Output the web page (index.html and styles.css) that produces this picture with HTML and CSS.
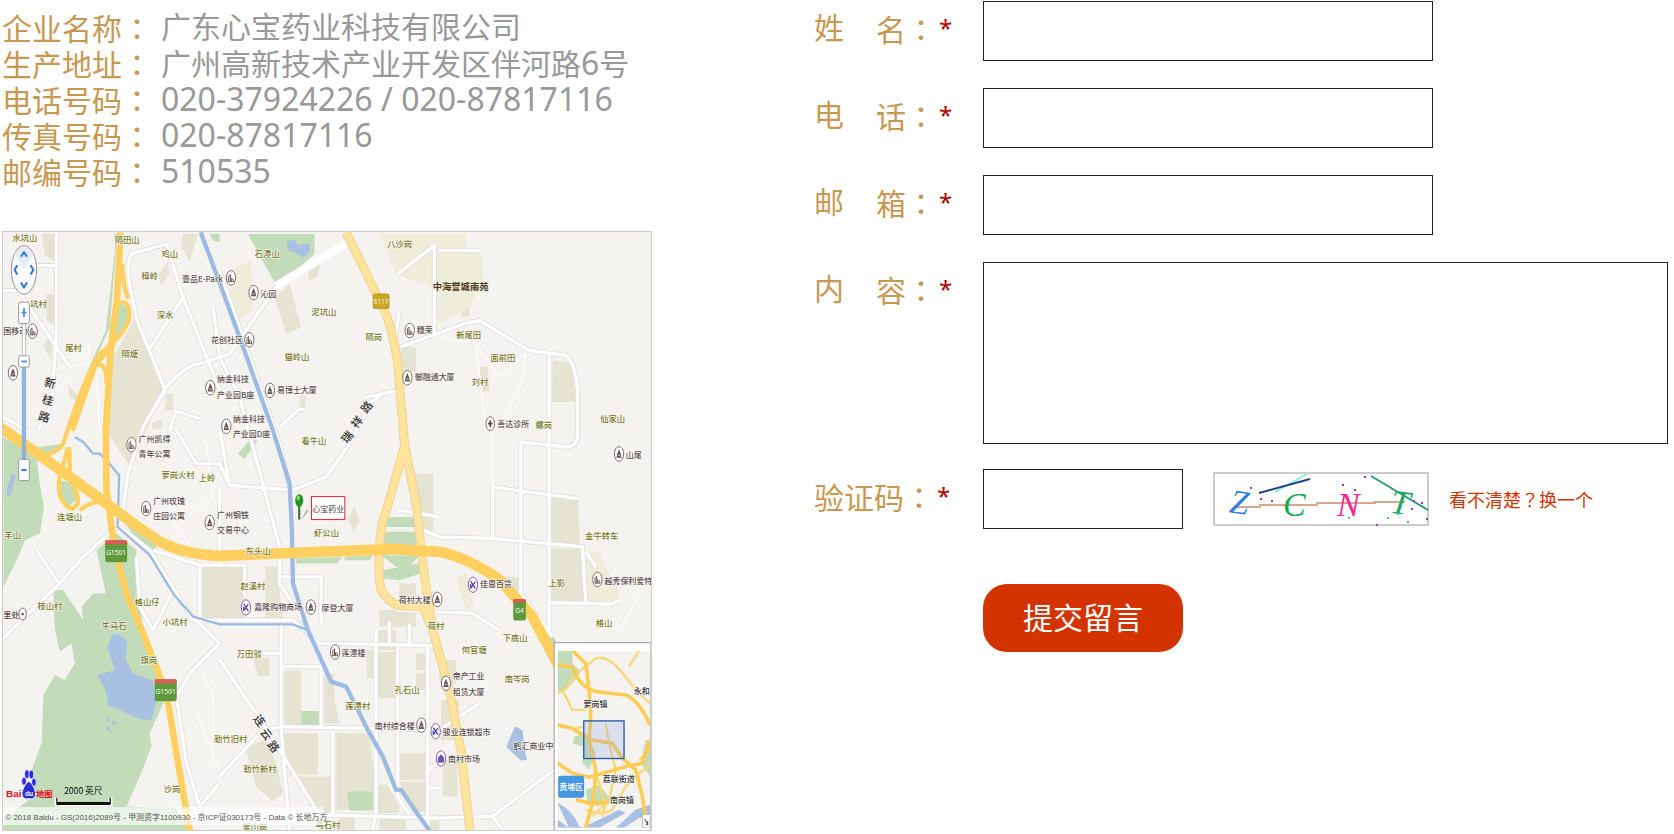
FILE: index.html
```html
<!DOCTYPE html>
<html lang="zh-CN">
<head>
<meta charset="utf-8">
<title>联系我们</title>
<link rel="stylesheet" href="styles.css">
</head>
<body>
<main class="contact">
  <section class="company">
    <dl class="info">
      <div class="info-row"><dt>企业名称<span class="colon" lang="zh-Hant">：</span></dt><dd>广东心宝药业科技有限公司</dd></div>
      <div class="info-row"><dt>生产地址<span class="colon" lang="zh-Hant">：</span></dt><dd>广州高新技术产业开发区伴河路<span class="num">6</span>号</dd></div>
      <div class="info-row"><dt>电话号码<span class="colon" lang="zh-Hant">：</span></dt><dd class="num">020-37924226 / 020-87817116</dd></div>
      <div class="info-row"><dt>传真号码<span class="colon" lang="zh-Hant">：</span></dt><dd class="num">020-87817116</dd></div>
      <div class="info-row"><dt>邮编号码<span class="colon" lang="zh-Hant">：</span></dt><dd class="num">510535</dd></div>
    </dl>
    <svg class="map" viewBox="9 4 1947 1798" role="img" aria-label="心宝药业位置地图">
      <defs>
        <g id="poi"><ellipse rx="14" ry="22" fill="#fff" stroke="#796d6d" stroke-width="3"/><path d="M-7 11V-5L-2-10V11M1 11V1L7 5V11M-8 11H8" fill="none" stroke="#6b5757" stroke-width="3"/></g>
        <g id="tower"><ellipse rx="14" ry="22" fill="#fff" stroke="#796d6d" stroke-width="3"/><path d="M0-14L5-2L8 11H-8L-5-2Z" fill="#6b5757"/><path d="M-4 4H4" stroke="#fff" stroke-width="2"/></g>
        <g id="shop"><ellipse rx="14" ry="23" fill="#fff" stroke="#7a5fae" stroke-width="3"/><path d="M-7-11L7 11M7-9L-6 9M-7-2V11" stroke="#5c3da5" stroke-width="4"/></g>
      </defs>
      <rect x="9" y="4" width="1947" height="1798" fill="#f4f3f0"/>

      <g fill="#e5e3d1">
        <path d="M125 10H170V95L135 75ZM137 190H165V285L140 270ZM130 345L155 310V390ZM205 465L230 490V510L210 500ZM475 135L505 90L510 130L485 165ZM550 10H595L570 90L545 50Z"/>
        <path d="M405 265L495 475L440 600L385 700L325 610L340 380ZM500 490H520V540H495ZM455 580L485 565V595L460 598Z"/>
        <path d="M825 200L870 160L905 290L860 310ZM920 100H963L955 135L930 150ZM1205 350H1250V425H1205ZM900 495H920L915 545L900 535Z"/>
        <path d="M1660 390L1720 395L1730 515H1658ZM1382 230L1410 228L1412 258L1385 260ZM1440 410H1465L1470 480L1450 485ZM1657 800H1738L1742 950H1657ZM1657 955H1755V1120H1657Z"/>
        <path d="M1245 728L1302 732V910H1265ZM660 1010H735V1175H610V1010ZM797 1010H840V1080L850 1170H797ZM1510 1040H1562V1090L1530 1080ZM1045 865L1065 830L1082 870L1063 905Z"/>
        <path d="M855 1322H905V1495H855ZM975 1330H1005V1410L1020 1480H975ZM1100 1260H1122V1345H1103ZM1138 1200H1190V1260H1138ZM1135 1265H1187V1405H1135ZM1250 1270H1280V1320H1250ZM1250 1330H1280V1380H1250Z"/>
        <path d="M850 1510H955V1635H870ZM1010 1510H1110L1125 1640H1010ZM895 1640H995V1750H940ZM1010 1640H1125V1740H1010ZM1200 1570H1278V1650H1200ZM1200 1655H1278V1745L1245 1750ZM1135 1665H1165L1200 1730V1750H1135ZM1140 1765H1220V1800H1140ZM1020 1765H1065V1800H1020ZM1280 1765H1320V1800H1280Z"/>
        <path d="M735 1550L800 1530L830 1600L850 1690L820 1715L770 1670ZM760 1285H810V1337H775Z"/>
        <path d="M1200 1060H1250V1120H1200ZM1140 1140H1250V1190H1140ZM1320 1290H1370V1360H1320ZM1325 1410H1380V1530H1325ZM1330 1590H1375V1700H1330Z"/>
      </g>
      <g fill="#eeedda">
        <path d="M690 120L755 90L760 240L715 270L695 200ZM1140 10H1400V50L1445 70L1455 140L1410 230L1320 280L1295 170L1190 130Z"/>
        <path d="M1760 965H1800L1825 1020L1860 1080L1855 1115L1765 1115ZM1370 1045L1400 1025L1425 1130L1400 1140Z"/>
      </g>
      <g fill="#c2dcba">
        <path d="M745 10H945V70L900 110L830 165L805 120Z"/>
        <path d="M630 10H660V35L640 30Z"/>
        <path d="M10 620L110 680L118 750L132 830L120 910L75 930L50 990L10 1070Z"/>
        <path d="M355 225Q385 215 382 250Q380 300 345 320ZM345 60V10H352L330 290L285 390H277L318 300Z"/>
        <path d="M75 655L190 640L160 670L110 690ZM180 750L225 760L232 805L205 830L182 805Z"/>
        <path d="M375 880L470 945V970L430 950Z"/>
        <path d="M190 1080L160 1080L165 1200L180 1265L215 1240L225 1300L195 1350L165 1335L130 1395L125 1540L95 1620L100 1700L10 1770V1802H570L530 1735L380 1730L420 1640L455 1550L450 1510L495 1410L470 1300L430 1200L410 1050L410 960L350 910L290 960L318 1090L280 1090L245 1130L250 1170Z"/>
        <path d="M715 670L750 630L775 630L735 685ZM890 985L1030 980L1010 1000H890ZM1035 980L1120 975L1110 990H1035Z"/>
        <path d="M1165 860H1245L1250 890H1155ZM1160 905H1250L1260 945H1145ZM1145 975H1260L1230 1010H1190ZM1150 1020L1255 1000L1265 1030L1200 1050L1150 1045Z"/>
        <path d="M1400 975L1500 1030L1630 1170L1670 1230V1300L1560 1090Z"/>
        <path d="M905 1443H960V1492H905ZM1043 1685H1120V1742H1050Z"/>
      </g>
      <g fill="#a8c0e1">
        <path d="M340 1210Q375 1215 382 1240L378 1290L400 1330L460 1352L468 1420L455 1470L420 1468L325 1425L318 1380L292 1335L345 1320L322 1250Z"/>
        <path d="M862 30L885 28L895 42L928 38L932 60L912 82L885 65L865 60ZM1548 1488L1570 1502L1577 1560L1583 1590L1565 1592L1522 1552L1528 1535Z"/>
        <path d="M35 730L48 735L35 790L22 800L20 780ZM318 1465L326 1460L326 1478ZM320 1485L340 1510L322 1500ZM335 1475L350 1472L340 1490Z"/>
      </g>

      <g fill="none" stroke="#dedede" stroke-width="15" stroke-linejoin="round">
        <path d="M170 10V300L155 520L115 600M10 560L80 600M110 105H168M10 180H55L210 410M500 40L395 70Q375 100 395 190L410 265L495 475M500 40L550 200L660 480M550 200L450 355"/>
        <path d="M365 870L385 730L430 590L500 470Q560 400 600 400L690 370L760 270L830 170L1060 30M530 600L590 700H660L690 765L880 780L980 740L1050 640L1115 515L1150 490L1200 480M525 540L600 565M530 540L510 600"/>
        <path d="M660 120L760 410L840 640L875 790M640 230L660 380L720 500L840 950V1060L930 1200M1200 350L1400 278L1440 270L1590 360L1700 375Q1730 400 1735 480V620Q1730 650 1700 650L1565 635V1090L1660 1220M1650 370V1200M1480 770L1735 805M1480 770V925M1250 890L1320 920L1480 925L1750 950L1760 1115M1655 1118L1840 1122L1860 1110M1760 965L1790 1010"/>
        <path d="M350 890L250 980L170 1070L80 1155L10 1225M180 1065L110 960M360 890L450 960L580 1170H880L960 1240L1240 1245L1330 1250M460 960L600 1005L735 1005V1100M600 1005V1170M410 980L420 1130L460 1200M520 1080L460 1200"/>
        <path d="M660 1290L790 1480L960 1755L1320 1765M845 1180V1500L870 1802M660 1640L790 1500L850 1490L1320 1500L1440 1420M845 1310H965V1490M1130 1200V1750L1120 1800M1195 1250V1700L1230 1755M1285 1250V1800M1000 1505V1755M780 1270H840M1320 1765L1480 1760L1665 1620M1480 1760L1510 1800M530 1400L570 1330L660 1240L560 1140M530 1400L560 1600L600 1730L660 1660M1285 1620L1330 1590M1285 1675H1320"/>
        <path d="M1190 1140L1420 1150L1500 1200M835 1040H965V1180M1170 1175V1250M1230 1180V1250M1200 840L1320 860M660 770V1000M660 600L690 765M840 590L900 535L920 540M1100 500L1150 490M1320 60H1440M1195 130L1305 45V310M1190 310L1200 240"/>
      </g>
      <g fill="none" stroke="#fff" stroke-width="10" stroke-linejoin="round">
        <path d="M170 10V300L155 520L115 600M10 560L80 600M110 105H168M10 180H55L210 410M500 40L395 70Q375 100 395 190L410 265L495 475M500 40L550 200L660 480M550 200L450 355"/>
        <path d="M365 870L385 730L430 590L500 470Q560 400 600 400L690 370L760 270L830 170L1060 30M530 600L590 700H660L690 765L880 780L980 740L1050 640L1115 515L1150 490L1200 480M525 540L600 565M530 540L510 600"/>
        <path d="M660 120L760 410L840 640L875 790M640 230L660 380L720 500L840 950V1060L930 1200M1200 350L1400 278L1440 270L1590 360L1700 375Q1730 400 1735 480V620Q1730 650 1700 650L1565 635V1090L1660 1220M1650 370V1200M1480 770L1735 805M1480 770V925M1250 890L1320 920L1480 925L1750 950L1760 1115M1655 1118L1840 1122L1860 1110M1760 965L1790 1010"/>
        <path d="M350 890L250 980L170 1070L80 1155L10 1225M180 1065L110 960M360 890L450 960L580 1170H880L960 1240L1240 1245L1330 1250M460 960L600 1005L735 1005V1100M600 1005V1170M410 980L420 1130L460 1200M520 1080L460 1200"/>
        <path d="M660 1290L790 1480L960 1755L1320 1765M845 1180V1500L870 1802M660 1640L790 1500L850 1490L1320 1500L1440 1420M845 1310H965V1490M1130 1200V1750L1120 1800M1195 1250V1700L1230 1755M1285 1250V1800M1000 1505V1755M780 1270H840M1320 1765L1480 1760L1665 1620M1480 1760L1510 1800M530 1400L570 1330L660 1240L560 1140M530 1400L560 1600L600 1730L660 1660M1285 1620L1330 1590M1285 1675H1320"/>
        <path d="M1190 1140L1420 1150L1500 1200M835 1040H965V1180M1170 1175V1250M1230 1180V1250M1200 840L1320 860M660 770V1000M660 600L690 765M840 590L900 535L920 540M1100 500L1150 490M1320 60H1440M1195 130L1305 45V310M1190 310L1200 240"/>
        <path d="M830 165L1055 30" stroke-width="24"/>
      </g>
      <g fill="none" stroke="#fff" stroke-width="3">
        <path d="M165 420L220 390L265 350V400L210 410M180 470L200 440M260 400L290 430L300 600M1320 320L1430 340L1500 440L1580 370M1430 340L1460 600M1580 370L1570 450L1500 590M1480 600V770M620 640L640 800L580 850M520 870L560 930M610 1330L640 1400V1600M590 1450L660 1620M1860 1200L1920 1100"/>
      </g>

      <g fill="none" stroke="#9dbbe2" stroke-linejoin="round">
        <path stroke-width="13" d="M603 5L650 130L720 320L820 600L870 760L877 900L880 1060L925 1200L995 1355L1040 1370L1105 1500L1150 1580L1190 1680H1205L1260 1760L1290 1802"/>
        <path stroke-width="7" d="M225 620L250 635L280 670H300L320 690L358 735L353 890L450 975L520 1090L580 1160L660 1183H880L925 1200"/>
      </g>

      <g fill="none" stroke="#efcf86" stroke-width="27" stroke-linejoin="round">
        <path d="M1040 5L1160 250Q1195 350 1200 460L1217 660M1217 640Q1160 850 1148 880Q1130 1000 1145 1080Q1170 1120 1200 1127L1270 1130L1300 1200M1215 640L1252 830L1270 1000L1300 1200L1350 1380L1385 1560L1412 1802"/>
      </g>
      <g fill="none" stroke="#fee39c" stroke-width="22" stroke-linejoin="round">
        <path d="M1040 5L1160 250Q1195 350 1200 460L1217 660M1217 640Q1160 850 1148 880Q1130 1000 1145 1080Q1170 1120 1200 1127L1270 1130L1300 1200M1215 640L1252 830L1270 1000L1300 1200L1350 1380L1385 1560L1412 1802"/>
      </g>
      <g fill="none" stroke="#ffd05f" stroke-linejoin="round">
        <path stroke-width="13" d="M367 100Q370 170 385 205M350 225Q390 195 388 260Q380 310 300 370Q260 420 190 640Q170 670 130 675M205 650L185 720Q170 760 182 800Q195 830 215 835Q240 830 232 795L210 730L208 650M300 815Q270 815 240 840M285 405Q320 390 320 460"/>
        <path stroke-width="20" d="M362 5L352 200L333 350L318 600L320 780L345 960L380 1090L430 1210L500 1390L535 1600L570 1802M340 340L285 400L215 600"/>
        <path stroke-width="32" d="M0 590L120 675L300 805L380 865L480 935Q560 975 660 977L880 968L1180 957L1320 965Q1400 980 1500 1048L1600 1160L1680 1310"/>
      </g>

      <g class="place">
        <text x="75" y="32">水坑山</text><text x="382" y="36">隔田山</text><text x="510" y="78">鸡山</text><text x="450" y="146">樟岭</text><text x="496" y="262">深水</text><text x="116" y="230">坑村</text><text x="221" y="362">尾村</text><text x="390" y="380">隔塘</text>
        <text x="803" y="80">石潭山</text><text x="1201" y="50">八沙岗</text><text x="973" y="252">泥坑山</text><text x="1123" y="328">隔岗</text><text x="892" y="388">猫岭山</text><text x="1408" y="322">新尾田</text><text x="1511" y="392">面前田</text><text x="1442" y="464">刘村</text><text x="1634" y="592">螺岗</text><text x="1841" y="576">仙家山</text>
        <text x="535" y="742">萝岗火村</text><text x="622" y="752">上岭</text><text x="209" y="868">连塘山</text><text x="38" y="922">羊山</text><text x="150" y="1138">枝山村</text><text x="442" y="1124">格山仔</text><text x="526" y="1186">小坑村</text><text x="343" y="1198">牛马石</text><text x="943" y="640">看牛山</text><text x="981" y="916">虾公山</text><text x="776" y="972">东头山</text><text x="760" y="1076">赵溪村</text>
        <text x="1808" y="926">金牛转车</text><text x="1673" y="1068">上影</text><text x="1815" y="1188">格山</text><text x="1310" y="1196">荷村</text><text x="447" y="1300">旗岗</text><text x="517" y="1686">沙岗</text><text x="749" y="1280">万田驳</text><text x="693" y="1536">勒竹旧村</text><text x="781" y="1628">勒竹新村</text><text x="1075" y="1436">莲潭村</text><text x="1223" y="1390">孔石山</text><text x="1425" y="1270">何官塘</text><text x="1548" y="1234">下底山</text><text x="1554" y="1356">南岑岗</text><text x="766" y="1800">釜山岗</text><text x="985" y="1796">乌石村</text>
      </g>
      <g class="spot">
        <text x="608" y="154">壹品E-Park</text><text x="806" y="198">沁园</text><text x="682" y="338">花创社区</text><text x="1276" y="308">穗荣</text><text x="1306" y="450">御融通大厦</text><text x="892" y="488">易博士大厦</text><text x="700" y="456">纳金科技</text><text x="708" y="502">产业园B座</text><text x="748" y="574">纳金科技</text><text x="756" y="620">产业园D座</text><text x="46" y="310">国移动</text>
        <text x="464" y="634">广州凯得</text><text x="464" y="680">青年公寓</text><text x="508" y="820">广州玫瑰</text><text x="508" y="866">庄园公寓</text><text x="700" y="864">广州钢铁</text><text x="700" y="908">交易中心</text><text x="1542" y="590">善达诊所</text><text x="1904" y="682">山尾</text><text x="1490" y="1072">佳恩百货</text><text x="1246" y="1118">荷村大楼</text><text x="836" y="1140">嘉隆购物商场</text><text x="1014" y="1142">摩登大厦</text><text x="34" y="1164">里处</text><text x="1062" y="1278">莲潭楼</text><text x="1186" y="1498">南村综合楼</text><text x="1408" y="1348">帝产工业</text><text x="1408" y="1394">租赁大厦</text><text x="1402" y="1516">骏业连锁超市</text><text x="1394" y="1598">南村市场</text><text x="1603" y="1556">鹤汇商业中</text><text x="1888" y="1062">越秀保利爱特</text>
      </g>
      <text class="estate" x="1384" y="178">中海誉城南苑</text>
      <g class="street">
        <text x="150" y="470" transform="rotate(15 150 460)">新</text><text x="143" y="522" transform="rotate(15 143 512)">桂</text><text x="132" y="572" transform="rotate(15 132 562)">路</text>
        <text x="1044" y="632" transform="rotate(-52 1044 620)">瑞</text><text x="1073" y="587" transform="rotate(-52 1073 575)">祥</text><text x="1102" y="542" transform="rotate(-52 1102 530)">路</text>
        <text x="778" y="1484" transform="rotate(52 778 1474)">连</text><text x="798" y="1524" transform="rotate(52 798 1514)">云</text><text x="820" y="1562" transform="rotate(52 820 1552)">路</text>
      </g>

      <use href="#poi" x="694" y="142"/><use href="#tower" x="762" y="186"/><use href="#poi" x="749" y="328"/><use href="#poi" x="1231" y="300"/><use href="#tower" x="1224" y="442"/><use href="#tower" x="811" y="480"/><use href="#tower" x="632" y="472"/><use href="#tower" x="680" y="588"/><use href="#poi" x="98" y="302"/><use href="#tower" x="39" y="427"/><use href="#poi" x="395" y="643"/><use href="#poi" x="439" y="835"/><use href="#tower" x="630" y="877"/><use href="#tower" x="1860" y="671"/><use href="#poi" x="1795" y="1048"/><use href="#tower" x="1314" y="1108"/><use href="#tower" x="934" y="1131"/><use href="#poi" x="1007" y="1266"/><use href="#tower" x="1266" y="1486"/><use href="#tower" x="1340" y="1360"/>
      <use href="#shop" x="739" y="1132"/><use href="#shop" x="1421" y="1064"/><use href="#shop" x="1309" y="1504"/>
      <ellipse cx="1325" cy="1586" rx="14" ry="23" fill="#fff" stroke="#7a5fae" stroke-width="3"/><path d="M1317 1582H1333V1597H1317ZM1320 1582Q1325 1568 1330 1582" fill="#7a4fc0" stroke="#5c3da5" stroke-width="2"/>
      <ellipse cx="1473" cy="580" rx="13" ry="21" fill="#fff" stroke="#796d6d" stroke-width="3"/><path d="M1466 580H1480M1473 570V590" stroke="#6b3b3b" stroke-width="5"/>
      <ellipse cx="68" cy="1152" rx="11" ry="18" fill="#fff" stroke="#796d6d" stroke-width="3"/><circle cx="68" cy="1152" r="4" fill="#6b5757"/>

      <g class="shield">
        <rect x="1121" y="190" width="48" height="44" rx="5" fill="#c9a71f" stroke="#a58a1c" stroke-width="2"/><text x="1145" y="219">S117</text>
        <rect x="316" y="930" width="66" height="66" rx="6" fill="#5f9b3c"/><path d="M316 940V934Q316 930 322 930H376Q382 930 382 934V942H316Z" fill="#dd5a5a"/><text x="349" y="976">G1501</text>
        <rect x="465" y="1348" width="66" height="66" rx="6" fill="#5f9b3c"/><path d="M465 1360V1352Q465 1348 471 1348H525Q531 1348 531 1352V1360Z" fill="#dd5a5a"/><text x="498" y="1392">G1501</text>
        <rect x="1542" y="1107" width="38" height="64" rx="5" fill="#5f9b3c"/><path d="M1542 1118V1111Q1542 1107 1547 1107H1575Q1580 1107 1580 1111V1118Z" fill="#dd5a5a"/><text x="1561" y="1150">G4</text>
      </g>

      <path d="M903 870L922 838L928 842Z" fill="#b5b5b0"/><path d="M896 825H902V868H896Z" fill="#2e6d26"/><ellipse cx="899" cy="811" rx="12" ry="19" fill="#22941c"/><ellipse cx="896" cy="803" rx="5" ry="8" fill="#89da6c"/>
      <rect x="936" y="799" width="100" height="69" fill="#fff" stroke="#f31f2a" stroke-width="3"/>
      <text class="marker" x="986" y="844">心宝药业</text>

      <g stroke-linejoin="round">
        <ellipse cx="72" cy="118" rx="38" ry="73" fill="#f8fafc" stroke="#929292" stroke-width="3"/><path d="M72 118L45 68Q72 28 99 68Z" fill="#e4ecf8"/>
        <path d="M63 78L72 64L81 78M63 156L72 171L81 156M52 104L44 118L52 132M92 104L100 118L92 132" fill="none" stroke="#3674dd" stroke-width="6"/>
        <rect x="67" y="270" width="10" height="120" fill="#fff" stroke="#a1a1a1" stroke-width="2"/><rect x="67" y="400" width="10" height="290" fill="#8bb4f4" stroke="#8d9bb0" stroke-width="2"/>
        <rect x="56" y="215" width="32" height="64" rx="5" fill="#fff" stroke="#999" stroke-width="3"/><path d="M64 246H80M72 232V260" stroke="#4b88ed" stroke-width="5"/>
        <rect x="56" y="376" width="32" height="34" rx="5" fill="#fff" stroke="#999" stroke-width="3"/><path d="M64 393H81" stroke="#4b88ed" stroke-width="5"/>
        <rect x="56" y="687" width="32" height="64" rx="5" fill="#fff" stroke="#999" stroke-width="3"/><path d="M64 719H80" stroke="#3878e0" stroke-width="6"/>
      </g>

      <rect x="9" y="1732" width="965" height="54" fill="#fff" fill-opacity=".65"/>
      <text class="copyright" x="16" y="1770">© 2018 Baidu - GS(2016)2089号 - 甲测资字1100930 - 京ICP证030173号 - Data © 长地万方</text>
      <g class="brand">
        <text x="18" y="1702" fill="#e10c1c">Bai</text>
        <text class="brand-cn" x="108" y="1702" fill="#e10c1c">地图</text>
        <g fill="#2a2bd9" stroke="#fff" stroke-width="2"><ellipse cx="72" cy="1654" rx="7" ry="12"/><ellipse cx="81" cy="1633" rx="7" ry="13"/><ellipse cx="94" cy="1634" rx="7" ry="13"/><ellipse cx="102" cy="1657" rx="7" ry="12"/><path d="M87 1655Q98 1660 107 1688Q107 1712 87 1706Q66 1712 66 1688Q75 1660 87 1655Z"/></g>
        <text class="brand-du" x="87" y="1698" fill="#fff">du</text>
      </g>
      <path d="M170 1704V1724H332V1704" fill="none" stroke="#fff" stroke-width="12"/><path d="M171 1704V1722H331V1704" fill="none" stroke="#111" stroke-width="4"/><path d="M171 1721H331" stroke="#111" stroke-width="9"/>
      <text class="scale" x="250" y="1692">2000 英尺</text>

      <g>
        <rect x="1665" y="1238" width="291" height="564" fill="#fff" stroke="#979797" stroke-width="3"/>
        <svg x="1675" y="1262" width="278" height="532" viewBox="355 62 278 532">
          <rect x="355" y="62" width="278" height="532" fill="#f4f3ef"/>
          <path d="M355 62H400V100L425 125L400 160L360 190L355 170ZM405 320L440 310L470 370L450 420L430 400L432 350L400 340ZM440 480L480 465L500 490L520 515L470 530L445 515ZM620 330H633V440L605 400Z" fill="#c2dcba"/>
          <path d="M355 520Q400 540 420 590L440 594H355V570L390 594ZM633 525L590 540L530 594H555L600 565L633 560ZM430 594Q480 570 540 540L560 550L480 594Z" fill="#a8c0e1"/>
          <g fill="none" stroke="#fbd675" stroke-width="7"><path d="M355 190Q390 180 400 140L470 85Q510 75 550 130L600 190L633 220M370 180L400 240L440 240M430 290L400 300M500 280L510 340L530 420L510 510L460 560M470 430L500 520L490 560M600 390L633 360M440 540Q490 560 520 540L560 470L600 430L633 410M570 110L600 62"/></g>
          <g fill="none" stroke="#fecb55" stroke-width="11"><path d="M400 62L440 100L450 180L455 250L450 330L470 420L465 500L440 594M355 105L400 112Q420 170 470 185L560 195Q600 210 633 285M355 285L400 295L455 330L520 340L550 385L590 420L610 500L625 594M355 400L400 430L450 442L570 408L610 400L633 330M410 510L450 520L510 518"/></g>
          <rect x="434" y="273" width="121" height="113" fill="#8ca9e8" fill-opacity=".25" stroke="#2558a9" stroke-width="4"/>
          <rect x="357" y="438" width="78" height="66" rx="7" fill="#4497df"/>
          <g class="spot mini"><text x="608" y="192">永和</text><text x="469" y="232">萝岗镇</text><text x="539" y="458">荔联街道</text><text x="549" y="520">南岗镇</text><text class="district" x="396" y="480">黄埔区</text></g>
          <rect x="611" y="554" width="22" height="40" fill="#fff" stroke="#aaa" stroke-width="2"/><path d="M617 568L626 584M626 574V585H620" fill="none" stroke="#444" stroke-width="3"/>
        </svg>
      </g>
    </svg>
  </section>

  <form class="message">
    <label class="caption" for="name"><span>姓</span><span>名<span class="colon" lang="zh-Hant">：</span><span class="star">*</span></span></label>
    <input class="field" id="name" type="text">
    <label class="caption" for="phone"><span>电</span><span>话<span class="colon" lang="zh-Hant">：</span><span class="star">*</span></span></label>
    <input class="field" id="phone" type="tel">
    <label class="caption" for="mail"><span>邮</span><span>箱<span class="colon" lang="zh-Hant">：</span><span class="star">*</span></span></label>
    <input class="field" id="mail" type="email">
    <label class="caption" for="content"><span>内</span><span>容<span class="colon" lang="zh-Hant">：</span><span class="star">*</span></span></label>
    <textarea class="field area" id="content"></textarea>
    <label class="caption" for="code"><span>验证码<span class="colon" lang="zh-Hant">：</span><span class="star">*</span></span></label>
    <div class="verify">
      <input class="field code" id="code" type="text">
      <svg class="captcha" viewBox="0 0 216 54" role="img" aria-label="验证码图片">
        <rect x="1" y="1" width="214" height="52" fill="#fff" stroke="#ccc" stroke-width="2"/>
        <path d="M20 35H47V33H104V31H162V30H192" fill="none" stroke="#d5a78d" stroke-width="2"/>
        <g class="captcha-text">
          <text x="17" y="42" fill="#2d7ee0" transform="rotate(8 28 30)">Z</text><text x="70" y="44" fill="#0eac4f">C</text><text x="124" y="44" fill="#f52796">N</text><text x="178" y="42" fill="#22a865" transform="rotate(8 188 30)">T</text>
        </g>
        <path d="M62 20L94 2" stroke="#85efc9" stroke-width="2"/><path d="M46 21L97 7" stroke="#233f91" stroke-width="2"/><path d="M158 4L215 38" stroke="#2c9d73" stroke-width="2"/>
        <path d="M37 16h2M47 27h2M58 29h2M129 13h2M141 18h2M151 5h2M198 37h2M208 31h2M213 47h2M163 53h2M200 29h2" stroke="#b02dd0" stroke-width="2"/><path d="M174 46h2M135 46h2M194 50h2M184 42h2" stroke="#4fc58c" stroke-width="2"/>
      </svg>
      <a class="refresh" href="#code">看不清楚<span class="colon" lang="zh-Hant">？</span>换一个</a>
    </div>
    <button class="submit" type="submit">提交留言</button>
  </form>
</main>
</body>
</html>
```

FILE: styles.css
```css
* {
  box-sizing: border-box;
}

body {
  margin: 0;
  background: #fff;
  font-family: "Noto Sans", "Noto Sans CJK SC", sans-serif;
  font-size: 30px;
}

.contact {
  display: grid;
  grid-template-columns: 650fr 854fr;
  column-gap: 162px;
  align-items: start;
  padding: 0 6px 0 2px;
}

.company {
  padding-top: 9px;
}

.info {
  margin: 0 0 42px;
  line-height: 36px;
}

.info-row {
  display: flex;
  gap: 9px;
  height: 36px;
  white-space: nowrap;
}

.info dt,
.caption {
  color: #c79851;
}

.info dd {
  margin: 0;
  color: #999;
}

.info .num {
  font-size: 32px;
}

.colon {
  font-family: "Noto Sans CJK TC", sans-serif;
}

.map {
  display: block;
  width: 100%;
  height: auto;
  border: 1px solid #ccc;
  font-family: "Noto Sans CJK SC", sans-serif;
}

.place text,
.spot text,
.street text,
.shield text,
.marker,
.estate,
.scale {
  text-anchor: middle;
}

.place,
.spot {
  font-size: 25px;
  font-weight: 500;
  paint-order: stroke;
  stroke: #fff;
  stroke-width: 3px;
}

.place {
  fill: #75771c;
}

.spot {
  fill: #5a4b4b;
  font-size: 24px;
}

.mini {
  fill: #333;
}

.mini .district {
  fill: #fff;
  stroke: none;
}

.estate {
  fill: #4d3b20;
  font-size: 28px;
  font-weight: 700;
}

.street {
  fill: #333;
  font-size: 34px;
  font-weight: 500;
}

.shield {
  fill: #fff;
  font-family: "Open Sans", sans-serif;
  font-size: 20px;
}

.marker {
  fill: #444;
  font-size: 24px;
}

.copyright {
  fill: #555;
  font-family: "Liberation Sans", "Noto Sans CJK SC", sans-serif;
  font-size: 24px;
}

.scale {
  fill: #111;
  font-size: 26px;
}

.brand {
  font-family: "Liberation Sans", "Noto Sans CJK SC", sans-serif;
  font-size: 30px;
  font-weight: 700;
}

.brand .brand-cn {
  font-size: 25px;
}

.brand .brand-du {
  font-size: 20px;
  text-anchor: middle;
}

.message {
  display: grid;
  grid-template-columns: 169px 1fr;
  row-gap: 27px;
  padding-top: 1px;
}

.caption {
  display: flex;
  gap: 32px;
  line-height: 54px;
  white-space: nowrap;
}

.star {
  padding-left: 3px;
  color: #b00000;
  font-size: 24px;
  line-height: 1;
  vertical-align: 4px;
}

.field {
  width: 100%;
  max-width: 450px;
  height: 60px;
  margin: 0;
  padding: 0 12px;
  border: 1px solid #222;
  border-radius: 0;
  background: #fff;
  font: inherit;
}

.area {
  display: block;
  max-width: none;
  height: 182px;
  margin-bottom: -2px;
  resize: none;
}

.verify {
  display: flex;
  align-items: center;
}

.code {
  width: 200px;
}

.captcha {
  flex: none;
  width: 216px;
  margin: 0 20px 0 30px;
}

.captcha-text {
  font-family: "Liberation Serif", serif;
  font-size: 34px;
  font-style: italic;
}

.refresh {
  color: #d23300;
  font-size: 18px;
  text-decoration: none;
  white-space: nowrap;
}

.submit {
  grid-column: 2;
  width: 200px;
  height: 68px;
  margin-top: 28px;
  padding: 0 0 4px;
  border: 0;
  border-radius: 24px;
  background: #d23300;
  color: #fff;
  font: inherit;
}
```
